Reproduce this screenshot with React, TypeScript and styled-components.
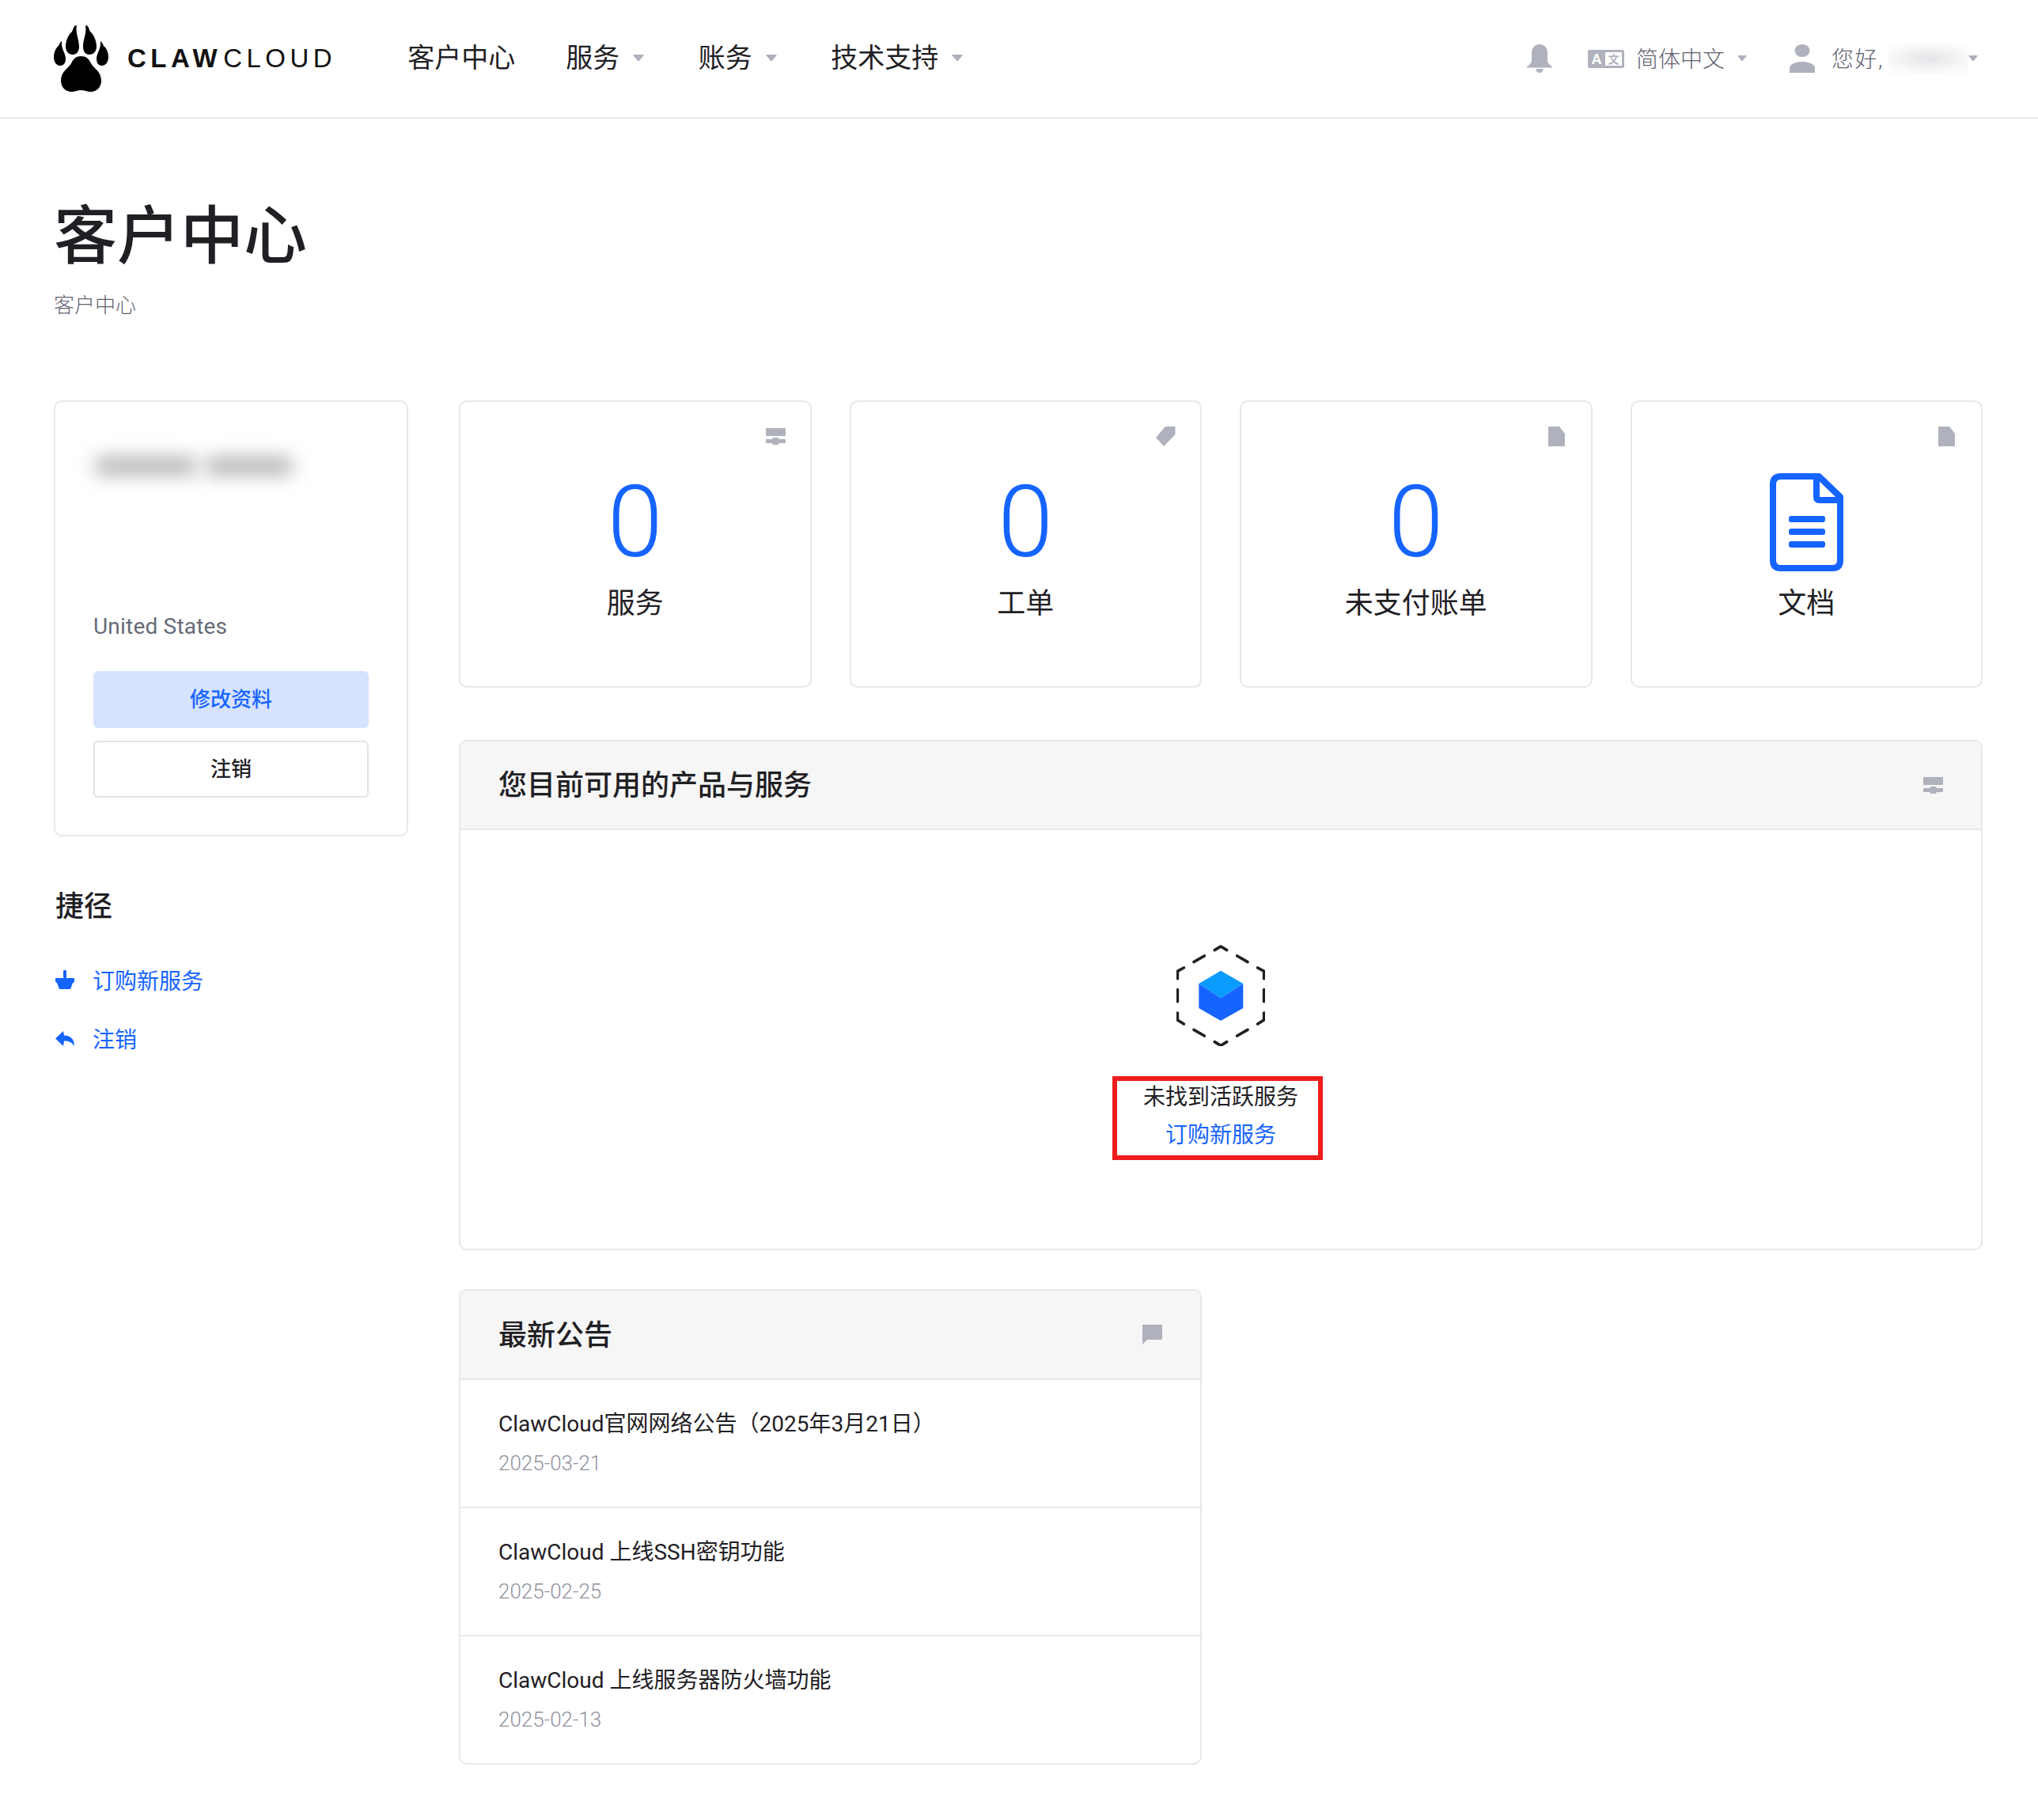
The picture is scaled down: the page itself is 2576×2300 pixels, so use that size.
import React from 'react';
import styled, {createGlobalStyle} from 'styled-components';

const BLUE = '#1664ff';
const ICON = '#afb1bd';
const INK = '#1f2024';
const LINE = '#e8e8ea';

const GlobalStyle = createGlobalStyle`
  * { box-sizing: border-box; }
  html, body { margin: 0; padding: 0; background: #fff; }
  body {
    font-family: Roboto, "Noto Sans CJK SC", sans-serif;
    color: ${INK};
  }
  a { text-decoration: none; color: inherit; }
`;

const Header = styled.header`
  display: flex;
  align-items: center;
  height: 150px;
  padding: 0 76px 0 68px;
  border-bottom: 2px solid ${LINE};
`;

const Logo = styled.div`
  display: flex;
  align-items: center;
  gap: 24px;
`;

const Wordmark = styled.div`
  font-family: "Liberation Sans", sans-serif;
  font-size: 33px;
  letter-spacing: 5.5px;
  line-height: 40px;
  color: #111;
  b { font-weight: 700; margin-right: 2px; }
`;

const Nav = styled.nav`
  display: flex;
  align-items: center;
  gap: 64px;
  margin-left: 90px;
`;

const NavItem = styled.a`
  display: flex;
  align-items: center;
  padding-bottom: 2px;
  font-size: 34px;
  line-height: 48px;
  font-weight: 400;
  color: ${INK};
`;

const CaretBox = styled.span`
  display: flex;
  justify-content: center;
  width: 22.5px;
  margin-left: 13px;
`;

const HeaderRight = styled.div`
  display: flex;
  align-items: center;
  margin-left: auto;
  color: #5f6270;
  font-size: 28px;
  font-weight: 300;
`;

const LangSwitch = styled.div`
  display: flex;
  align-items: center;
  margin-left: 45px;
  gap: 15px;
`;

const LangLabel = styled.span`
  padding-bottom: 3px;
  margin-right: 1px;
`;

const UserMenu = styled.div`
  display: flex;
  align-items: center;
  margin-left: 54px;
`;

const Greeting = styled.span`
  margin-left: 21px;
  padding-bottom: 3px;
  width: 72px;
  letter-spacing: 1.5px;
  white-space: nowrap;
`;

const HiddenName = styled.span`
  display: block;
  width: 101px;
  height: 38px;
  background: radial-gradient(ellipse 58px 19px at center, #e4e5e8 0, #fbfbfb 100%);
`;

const Main = styled.main`
  padding: 101px 70px 0 68px;
`;

const PageTitle = styled.h1`
  margin: 0;
  font-size: 80px;
  line-height: 96px;
  font-weight: 500;
  color: ${INK};
`;

const Breadcrumb = styled.div`
  margin-top: 21px;
  font-size: 26px;
  line-height: 36px;
  font-weight: 300;
  color: #5f6270;
`;

const Columns = styled.div`
  display: grid;
  grid-template-columns: 448px 1926px;
  column-gap: 64px;
  margin-top: 102px;
`;

const Card = styled.section`
  border: 2px solid ${LINE};
  border-radius: 10px;
  background: #fff;
`;

const ProfileCard = styled(Card)`
  height: 551px;
  padding: 47px 48px 48px;
`;

const ProfileName = styled.div`
  display: flex;
  align-items: center;
  gap: 14px;
  height: 68px;
  padding-left: 3px;
`;

const NameBlur = styled.span<{$w: number}>`
  display: block;
  width: ${p => p.$w}px;
  height: 20px;
  background: #a8a8a8;
  filter: blur(12px);
`;

const Country = styled.div`
  margin-top: 149px;
  font-size: 28px;
  line-height: 40px;
  font-weight: 400;
  letter-spacing: 0.2px;
  color: #666a78;
`;

const ProfileButton = styled.a<{$primary?: boolean}>`
  display: flex;
  align-items: center;
  justify-content: center;
  height: 72px;
  margin-top: ${p => (p.$primary ? '36px' : '16px')};
  padding-bottom: 6px;
  border-radius: 6px;
  font-size: 26px;
  font-weight: 500;
  background: ${p => (p.$primary ? '#d6e3ff' : '#fff')};
  color: ${p => (p.$primary ? BLUE : INK)};
  border: ${p => (p.$primary ? 'none' : `2px solid #e3e3e6`)};
`;

const SideHeading = styled.h2`
  margin: 64px 0 30px;
  font-size: 36px;
  line-height: 50px;
  font-weight: 500;
  padding-left: 2px;
`;

const ShortcutLink = styled.a`
  display: flex;
  align-items: center;
  gap: 23px;
  height: 74px;
  padding-left: 2px;
  font-size: 28px;
  font-weight: 400;
  color: ${BLUE};
`;

const Content = styled.div`
  min-width: 0;
`;

const StatGrid = styled.div`
  display: grid;
  grid-template-columns: repeat(4, 1fr);
  gap: 48px;
`;

const StatCard = styled(Card)`
  display: flex;
  flex-direction: column;
  align-items: center;
  height: 363px;
`;

const CornerRow = styled.div`
  display: flex;
  justify-content: flex-end;
  align-items: center;
  align-self: stretch;
  height: 30px;
  margin-top: 28px;
  padding-right: 31px;
`;

const StatValue = styled.div`
  display: flex;
  align-items: center;
  justify-content: center;
  height: 124px;
  margin-top: 32px;
  font-family: Roboto, sans-serif;
  font-size: 126px;
  font-weight: 300;
  color: ${BLUE};
`;

const StatLabel = styled.div`
  margin-top: 16px;
  font-size: 36px;
  line-height: 50px;
  font-weight: 400;
  color: ${INK};
`;

const Panel = styled(Card)<{$narrow?: boolean}>`
  overflow: hidden;
  margin-top: ${p => (p.$narrow ? '49px' : '66px')};
  width: ${p => (p.$narrow ? '939px' : 'auto')};
`;

const PanelHeader = styled.div<{$h: number}>`
  display: flex;
  align-items: center;
  justify-content: space-between;
  height: ${p => p.$h}px;
  padding: 0 48px;
  background: #f6f6f6;
  border-bottom: 2px solid ${LINE};
`;

const PanelTitle = styled.h3`
  margin: 0 0 6px;
  font-size: 36px;
  font-weight: 500;
  color: ${INK};
`;

const EmptyState = styled.div`
  display: flex;
  flex-direction: column;
  align-items: center;
  padding: 145px 0 112px;
`;

const EmptyNote = styled.div`
  display: flex;
  flex-direction: column;
  align-items: center;
  gap: 10px;
  width: 266px;
  margin: 38px 8px 0 0;
  padding: 2px 0 6px 8px;
  border: 6px solid #ee1c1c;
  font-size: 28px;
  line-height: 38px;
  font-weight: 400;
  a { color: ${BLUE}; }
`;

const NoticeRow = styled.div`
  height: 162px;
  padding: 36px 48px 0;
  border-bottom: 2px solid ${LINE};
  &:last-child { border-bottom: none; height: 160px; }
`;

const NoticeTitle = styled.div`
  font-size: 28px;
  line-height: 40px;
  font-weight: 400;
  color: ${INK};
`;

const NoticeDate = styled.div`
  margin-top: 9px;
  font-size: 26px;
  line-height: 40px;
  font-weight: 300;
  color: #8f92a0;
`;

function Caret({w = 14}: {w?: number}) {
  return (
    <svg width={w} height={w * 0.6} viewBox="0 0 14 8.4" fill={ICON}>
      <path d="M1.2 0H12.8Q14.2 0 13.4 1.2L8 7.8Q7 8.8 6 7.8L.6 1.2Q-.2 0 1.2 0Z" />
    </svg>
  );
}

function PawLogo() {
  const toe = 'M29 0C25 0 25 4 23 8C18 12 15 20 15 27C15 33 19 37 24 37C29 37 32 33 32 27C32 17 27 10 29 0Z';
  const outer = 'M10 20C8 21 7 24 6 26C2 29 0 35 0 40C0 47 4 51 8 51C13 51 15 47 15 42C15 35 9 30 10 20Z';
  return (
    <svg width="69" height="84" viewBox="0 0 69 84" fill="#000">
      <path d={toe} />
      <path d={outer} />
      <g transform="translate(69 0) scale(-1 1)">
        <path d={toe} />
        <path d={outer} />
      </g>
      <path d="M34.5 39C41 39 44 42 47 48C50 54 60 58 60 70C60 79 53 84 47 84C42 84 39 82 34.5 82C30 82 27 84 22 84C16 84 9 79 9 70C9 58 19 54 22 48C25 42 28 39 34.5 39Z" />
    </svg>
  );
}

function BellIcon() {
  return (
    <svg width="32" height="36" viewBox="0 0 32 36" fill={ICON}>
      <path d="M16 0C9 0 6 5 6 12V20C6 24 3 26 0 28.500V29.500H32V28.500C29 26 26 24 26 20V12C26 5 23 0 16 0Z" />
      <path d="M11.500 31H20.500C20.500 34.500 18.500 36 16 36C13.500 36 11.500 34.500 11.500 31Z" />
    </svg>
  );
}

function TranslateIcon() {
  return (
    <svg width="46" height="23" viewBox="0 0 46 23">
      <rect width="46" height="23" rx="2" fill={ICON} />
      <rect x="22" y="3" width="21" height="17" fill="#fff" />
      <text x="11" y="18" textAnchor="middle" fontFamily="Liberation Sans" fontWeight="700" fontSize="18" fill="#fff">A</text>
      <text x="32.500" y="17" textAnchor="middle" fontFamily="Noto Sans CJK SC" fontWeight="700" fontSize="14" fill={ICON}>文</text>
    </svg>
  );
}

function UserIcon() {
  return (
    <svg width="32" height="36" viewBox="0 0 32 36" fill={ICON}>
      <ellipse cx="16" cy="8" rx="9.500" ry="8" />
      <path d="M0 36V30C0 25 8 22 16 22C24 22 32 25 32 30V36Z" />
    </svg>
  );
}

function ServerIcon() {
  return (
    <svg width="25" height="21" viewBox="0 0 25 21" fill={ICON}>
      <rect width="25" height="10" rx="1" />
      <rect y="14" width="25" height="5" rx="1" />
      <rect x="8.500" y="12" width="8" height="9" rx="1" />
    </svg>
  );
}

function TagIcon() {
  return (
    <svg width="25" height="25" viewBox="0 0 25 25" fill={ICON}>
      <path d="M24.500 0V10L10 25L0 14L11 1Q12 0 13 0Z" />
    </svg>
  );
}

function PageIcon() {
  return (
    <svg width="23" height="25" viewBox="0 0 23 25" fill={ICON}>
      <path d="M0 1Q0 0 1 0H14L21 9V25H0Z" />
    </svg>
  );
}

function CommentIcon() {
  return (
    <svg width="25" height="25" viewBox="0 0 25 25" fill={ICON}>
      <path d="M0 0H25V19H6L0 25Z" />
    </svg>
  );
}

function DocumentIcon() {
  return (
    <svg width="93" height="124" viewBox="0 0 93 124" fill="none">
      <path stroke={BLUE} strokeWidth="8" strokeLinejoin="round" d="M14 4H62L89 30V110Q89 120 79 120H14Q4 120 4 110V14Q4 4 14 4Z" />
      <path stroke={BLUE} strokeWidth="8" d="M59 6V30Q59 34 63 34H88" />
      <rect x="24" y="54" width="46" height="8" rx="3" fill={BLUE} />
      <rect x="24" y="70" width="46" height="8" rx="3" fill={BLUE} />
      <rect x="24" y="86" width="46" height="8" rx="3" fill={BLUE} />
    </svg>
  );
}

function BasketIcon() {
  return (
    <svg width="24" height="24" viewBox="0 0 24 24" fill={BLUE}>
      <rect x="10" width="4" height="10" rx="1" />
      <path d="M1 10H23Q24 10 24 11V14Q24 16 22 16L19.500 23Q19 24 18 24H6Q5 24 4.500 23L2 16Q0 16 0 14V11Q0 10 1 10Z" />
    </svg>
  );
}

function ReplyIcon() {
  return (
    <svg width="24" height="19" viewBox="0 0 24 19" fill={BLUE}>
      <path d="M0 9.500L10 0L11 5.500C19 5.500 24 10 24 19C21 14 17 12.500 11 12.500L10 19Z" />
    </svg>
  );
}

function CubeBadge() {
  const dashes = [
    'M465 90L488 76L511 90',
    'M550 112L590 135',
    'M628 157L652 170V198',
    'M652 240V285',
    'M652 328V355L628 370',
    'M590 392L550 415',
    'M511 438L488 452L465 438',
    'M426 415L386 392',
    'M348 370L324 355V328',
    'M324 285V240',
    'M324 198V170L348 157',
    'M386 135L426 112',
  ];
  return (
    <svg width="112" height="128" viewBox="320 70 336 384" fill="none">
      {dashes.map(d => (
        <path key={d} d={d} stroke={INK} strokeWidth="11" strokeLinecap="round" strokeLinejoin="round" />
      ))}
      <path d="M405 217L488 272L573 217V310L488 358L405 310Z" fill={BLUE} />
      <path d="M488 168L573 217L488 272L405 217Z" fill="#0a9bff" />
    </svg>
  );
}

const stats = [
  {label: '服务', corner: <ServerIcon />, value: '0'},
  {label: '工单', corner: <TagIcon />, value: '0'},
  {label: '未支付账单', corner: <PageIcon />, value: '0'},
  {label: '文档', corner: <PageIcon />, value: <DocumentIcon />},
];

const notices = [
  {title: 'ClawCloud官网网络公告（2025年3月21日）', date: '2025-03-21'},
  {title: 'ClawCloud 上线SSH密钥功能', date: '2025-02-25'},
  {title: 'ClawCloud 上线服务器防火墙功能', date: '2025-02-13'},
];

export default function App() {
  return (
    <>
      <GlobalStyle />
      <Header>
        <Logo>
          <PawLogo />
          <Wordmark><b>CLAW</b>CLOUD</Wordmark>
        </Logo>
        <Nav>
          <NavItem>客户中心</NavItem>
          <NavItem>服务<CaretBox><Caret /></CaretBox></NavItem>
          <NavItem>账务<CaretBox><Caret /></CaretBox></NavItem>
          <NavItem>技术支持<CaretBox><Caret /></CaretBox></NavItem>
        </Nav>
        <HeaderRight>
          <BellIcon />
          <LangSwitch>
            <TranslateIcon />
            <LangLabel>简体中文</LangLabel>
            <Caret w={12} />
          </LangSwitch>
          <UserMenu>
            <UserIcon />
            <Greeting>您好,</Greeting>
            <HiddenName />
            <Caret w={12} />
          </UserMenu>
        </HeaderRight>
      </Header>
      <Main>
        <PageTitle>客户中心</PageTitle>
        <Breadcrumb>客户中心</Breadcrumb>
        <Columns>
          <aside>
            <ProfileCard>
              <ProfileName>
                <NameBlur $w={126} />
                <NameBlur $w={108} />
              </ProfileName>
              <Country>United States</Country>
              <ProfileButton $primary>修改资料</ProfileButton>
              <ProfileButton>注销</ProfileButton>
            </ProfileCard>
            <SideHeading>捷径</SideHeading>
            <ShortcutLink><BasketIcon />订购新服务</ShortcutLink>
            <ShortcutLink><ReplyIcon />注销</ShortcutLink>
          </aside>
          <Content>
            <StatGrid>
              {stats.map(s => (
                <StatCard key={s.label}>
                  <CornerRow>{s.corner}</CornerRow>
                  <StatValue>{s.value}</StatValue>
                  <StatLabel>{s.label}</StatLabel>
                </StatCard>
              ))}
            </StatGrid>
            <Panel>
              <PanelHeader $h={112}>
                <PanelTitle>您目前可用的产品与服务</PanelTitle>
                <ServerIcon />
              </PanelHeader>
              <EmptyState>
                <CubeBadge />
                <EmptyNote>
                  <span>未找到活跃服务</span>
                  <a>订购新服务</a>
                </EmptyNote>
              </EmptyState>
            </Panel>
            <Panel $narrow>
              <PanelHeader $h={113}>
                <PanelTitle>最新公告</PanelTitle>
                <CommentIcon />
              </PanelHeader>
              {notices.map(n => (
                <NoticeRow key={n.date}>
                  <NoticeTitle>{n.title}</NoticeTitle>
                  <NoticeDate>{n.date}</NoticeDate>
                </NoticeRow>
              ))}
            </Panel>
          </Content>
        </Columns>
      </Main>
    </>
  );
}
